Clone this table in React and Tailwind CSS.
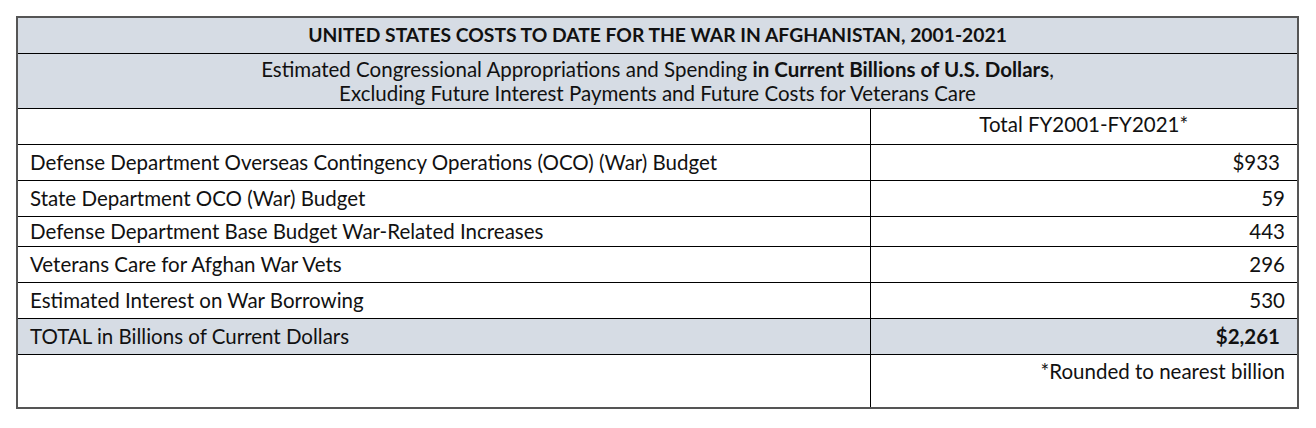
const rows = [
  { label: "Defense Department Overseas Contingency Operations (OCO) (War) Budget", value: "$933", pad: true, h: "h-[36px]" },
  { label: "State Department OCO (War) Budget", value: "59", h: "h-[36px]" },
  { label: "Defense Department Base Budget War-Related Increases", value: "443", h: "h-[30px]" },
  { label: "Veterans Care for Afghan War Vets", value: "296", h: "h-[36px]" },
  { label: "Estimated Interest on War Borrowing", value: "530", h: "h-[36px]" },
];

export default function App() {
  return (
    <div className="min-h-[428px] w-[1316px] bg-white pt-[16px] pl-[16px] font-['Lato',sans-serif] text-[20.5px] leading-[22px] text-[#111]">
      <table className="w-[1281px] table-fixed border-collapse border-2 border-[#555]">
        <colgroup>
          <col className="w-[853px]" />
          <col className="w-[428px]" />
        </colgroup>
        <tbody>
          <tr className="h-[36px] bg-[#d6dce4]">
            <td colSpan={2} className="border-b border-black text-center align-middle text-[19.3px] font-bold">
              UNITED STATES COSTS TO DATE FOR THE WAR IN AFGHANISTAN, 2001-2021
            </td>
          </tr>
          <tr className="h-[55px] bg-[#d6dce4]">
            <td colSpan={2} className="border-b border-black text-center align-middle leading-[24px]">
              Estimated Congressional Appropriations and Spending <b>in Current Billions of U.S. Dollars</b>,
              <br />
              Excluding Future Interest Payments and Future Costs for Veterans Care
            </td>
          </tr>
          <tr className="h-[36px]">
            <td className="border-b border-r border-black"></td>
            <td className="border-b border-black text-center align-top pt-[4px]">Total FY2001-FY2021*</td>
          </tr>
          {rows.map((r) => (
            <tr key={r.label} className={r.h}>
              <td className="border-b border-r border-black pl-[12px] align-middle">{r.label}</td>
              <td className="border-b border-black pr-[12px] text-right align-middle">
                <span className={r.pad ? "pr-[5px]" : ""}>{r.value}</span>
              </td>
            </tr>
          ))}
          <tr className="h-[36px] bg-[#d6dce4]">
            <td className="border-b border-r border-black pl-[12px] align-middle">TOTAL in Billions of Current Dollars</td>
            <td className="border-b border-black pr-[17px] text-right align-middle font-bold">$2,261</td>
          </tr>
          <tr className="h-[54px]">
            <td className="border-r border-black"></td>
            <td className="pr-[12px] pt-[5px] text-right align-top">*Rounded to nearest billion</td>
          </tr>
        </tbody>
      </table>
    </div>
  );
}
